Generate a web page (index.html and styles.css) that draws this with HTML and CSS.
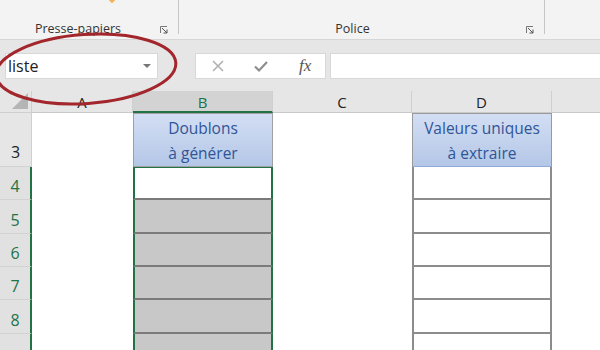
FILE: index.html
```html
<!DOCTYPE html>
<html lang="fr">
<head>
<meta charset="utf-8">
<title>Excel</title>
<link rel="stylesheet" href="styles.css">
</head>
<body>
<div class="app">
  <div class="ribbon">
    <div class="group g1">
      <span class="paste-tip"></span>
      <span class="glabel">Presse-papiers</span>
      <svg class="launcher" width="8" height="8" viewBox="0 0 8 8"><path d="M0.5 7V0.5H7" fill="none" stroke="#777" stroke-width="1"/><path d="M2 2L7 7M7 3.5V7H3.5" fill="none" stroke="#555" stroke-width="1"/></svg>
    </div>
    <div class="group g2">
      <span class="glabel">Police</span>
      <svg class="launcher" width="8" height="8" viewBox="0 0 8 8"><path d="M0.5 7V0.5H7" fill="none" stroke="#777" stroke-width="1"/><path d="M2 2L7 7M7 3.5V7H3.5" fill="none" stroke="#555" stroke-width="1"/></svg>
    </div>
    <div class="group g3"></div>
  </div>
  <div class="fbar">
    <div class="namebox"><span>liste</span><span class="dd"></span></div>
    <div class="dots"></div>
    <div class="fbtns">
      <svg width="14" height="14" viewBox="0 0 14 14"><path d="M2 2L12 12M12 2L2 12" stroke="#b0b0b0" stroke-width="1.6"/></svg>
      <svg width="16" height="14" viewBox="0 0 16 14"><path d="M2 7.5L6 11.5L14 3" fill="none" stroke="#8e8e8e" stroke-width="2.2"/></svg>
      <span class="fx">fx</span>
    </div>
    <div class="finput"></div>
  </div>
  <div class="sheet">
    <div class="corner"><span class="tri"></span></div>
    <div class="ch">A</div>
    <div class="ch sel">B</div>
    <div class="ch">C</div>
    <div class="ch">D</div>
    <div class="ch last"></div>

    <div class="rh">3</div>
    <div class="c"></div>
    <div class="c head hb">Doublons<br>à générer</div>
    <div class="c"></div>
    <div class="c head hd">Valeurs uniques<br>à extraire</div>
    <div class="c"></div>

    <div class="rh on">4</div>
    <div class="c"></div>
    <div class="c bcell active"></div>
    <div class="c"></div>
    <div class="c dcell"></div>
    <div class="c"></div>

    <div class="rh on">5</div>
    <div class="c"></div>
    <div class="c bcell gray"></div>
    <div class="c"></div>
    <div class="c dcell"></div>
    <div class="c"></div>

    <div class="rh on">6</div>
    <div class="c"></div>
    <div class="c bcell gray"></div>
    <div class="c"></div>
    <div class="c dcell"></div>
    <div class="c"></div>

    <div class="rh on">7</div>
    <div class="c"></div>
    <div class="c bcell gray"></div>
    <div class="c"></div>
    <div class="c dcell"></div>
    <div class="c"></div>

    <div class="rh on">8</div>
    <div class="c"></div>
    <div class="c bcell gray"></div>
    <div class="c"></div>
    <div class="c dcell"></div>
    <div class="c"></div>

    <div class="rh on"></div>
    <div class="c"></div>
    <div class="c bcell gray"></div>
    <div class="c"></div>
    <div class="c dcell"></div>
    <div class="c"></div>
  </div>
  <svg class="ring" width="600" height="350" viewBox="0 0 600 350"><ellipse cx="86" cy="69" rx="90" ry="34.5" transform="rotate(-4 86 69)" fill="none" stroke="#a2262b" stroke-width="3"/></svg>
</div>
</body>
</html>
```

FILE: styles.css
```css
html, body { margin: 0; padding: 0; }
body { width: 600px; height: 350px; overflow: hidden; background: #fff; font-family: "Open Sans", "Noto Sans", sans-serif; }
.app { position: relative; width: 600px; height: 350px; overflow: hidden; }

.ribbon { height: 39px; background: #f3f3f3; border-bottom: 1px solid #d6d6d6; display: flex; }
.group { position: relative; height: 34px; display: flex; align-items: flex-end; }
.g1 { width: 178px; border-right: 1px solid #c6c6c6; justify-content: center; }
.g2 { width: 365px; border-right: 1px solid #c6c6c6; justify-content: center; }
.g3 { flex: 1; }
.glabel { font-size: 12.5px; color: #333; line-height: 16px; margin-bottom: -3px; }
.g1 .glabel { margin-right: 22px; }
.g2 .glabel { margin-right: 18px; }
.launcher { position: absolute; right: 10px; bottom: 0; }
.paste-tip { position: absolute; left: 109px; top: -4px; width: 6px; height: 6px; background: #f0b254; transform: rotate(45deg); }

.fbar { height: 51px; background: #e6e6e6; display: flex; align-items: flex-start; padding-top: 13px; box-sizing: border-box; }
.namebox { margin-left: 5px; width: 153px; height: 26px; background: #fff; border: 1px solid #d8d8d8; box-sizing: border-box; display: flex; align-items: center; justify-content: space-between; padding: 0 6px 0 2px; }
.namebox span:first-child { font-size: 16px; color: #222; }
.dd { width: 0; height: 0; border-left: 4px solid transparent; border-right: 4px solid transparent; border-top: 4px solid #777; }
.dots { width: 37px; }
.fbtns { width: 131px; height: 26px; background: #fff; border: 1px solid #d8d8d8; box-sizing: border-box; display: flex; align-items: center; padding-left: 15px; gap: 28px; }
.fx { font-family: "Liberation Serif", serif; font-style: italic; font-size: 17px; color: #555; margin-left: 2px; }
.finput { margin-left: 4px; flex: 1; height: 26px; background: #fff; border: 1px solid #d8d8d8; border-right: none; box-sizing: border-box; }

.sheet { display: grid; grid-template-columns: 32px 101px 140px 139px 140px 48px; grid-template-rows: 22px 54px 33px 34px 33px 33px 34px 33px; font-family: "Open Sans", sans-serif; }
.corner { background: #e6e6e6; border-right: 1px solid #cfcfcf; border-bottom: 1px solid #cfcfcf; position: relative; box-sizing: border-box; }
.tri { position: absolute; right: 3px; bottom: 3px; width: 0; height: 0; border-left: 16px solid transparent; border-bottom: 16px solid #b5b5b5; }
.ch { background: #e6e6e6; border-right: 1px solid #cfcfcf; border-bottom: 1px solid #c9c9c9; box-sizing: border-box; font-size: 15px; color: #222; text-align: center; line-height: 23px; }
.ch.sel { background: #d3d3d3; color: #217346; border-bottom: 2px solid #217346; }
.ch.last { border-right: none; }
.rh { background: #e6e6e6; border-bottom: 1px solid #d2d2d2; border-right: 1px solid #cfcfcf; box-sizing: border-box; font-size: 16px; color: #222; display: flex; align-items: flex-end; justify-content: center; padding-bottom: 3px; }
.rh.on { color: #217346; border-right: 2px solid #217346; background: #e1e1e1; padding-bottom: 2px; }
.c { background: #fff; box-sizing: border-box; }
.head { background: linear-gradient(#d3def3, #b4c7e7); border: 1px solid #9a9a9a; border-bottom: 1px solid #8eaadb; color: #2f5597; font-size: 15.5px; line-height: 25px; text-align: center; padding-top: 2px; }
.hb { border-color: #a0a0a0; }
.bcell { border-left: 2px solid #217346; border-right: 2px solid #217346; border-bottom: 2px solid #7b7b7b; }
.active { border-top: 1px solid #217346; background: #fff; }
.gray { background: #c8c8c8; }
.dcell { border-left: 2px solid #8c8c8c; border-right: 2px solid #8c8c8c; border-bottom: 2px solid #8c8c8c; }

.ring { position: absolute; left: 0; top: 0; pointer-events: none; }
```
